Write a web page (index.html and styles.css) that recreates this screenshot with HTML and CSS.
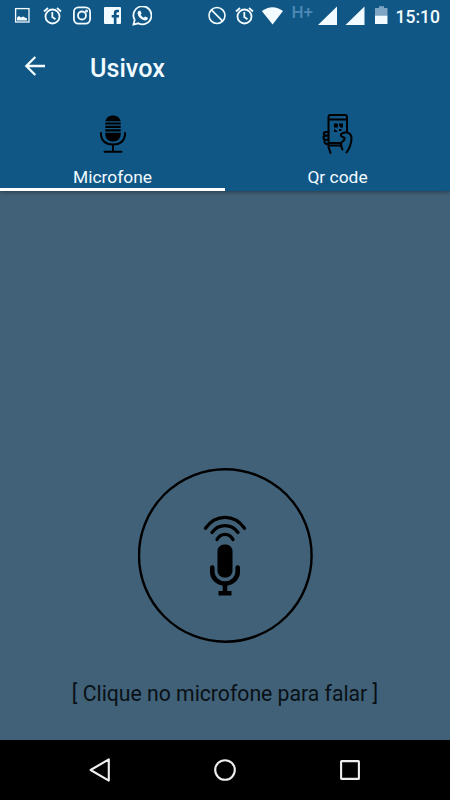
FILE: index.html
```
<!DOCTYPE html>
<html lang="pt-BR">
<head>
  <meta charset="UTF-8" />
  <meta name="viewport" content="width=device-width, initial-scale=1.0" />
  <title>Usivox</title>
  <link rel="stylesheet" href="styles.css">
</head>
<body>
  <div class="screen">
    <header class="header">
      <div class="status-bar">
        <div class="notifications">
          <svg viewBox="0 0 20 20"><rect x="3.6" y="2.6" width="13.4" height="13.4" fill="none" stroke="currentColor" stroke-width="1.3"/><path d="M5 14.5v-3l2-1.500 2 1.500 2-1 2 1 2 1v2z" fill="currentColor"/></svg>
          <svg viewBox="0 0 20 20" fill="none" stroke="currentColor" stroke-width="1.8"><circle cx="10.500" cy="10.500" r="7"/><path d="M10.300 6v5l3.200 2.200M2 5.500l4-3.500M19 5.500l-4-3.500"/></svg>
          <svg viewBox="0 0 20 20" fill="none" stroke="currentColor" stroke-width="1.8"><rect x="1.900" y="1.400" width="16.200" height="16.200" rx="4.500"/><circle cx="10" cy="9.500" r="4"/><circle cx="14.500" cy="5" r=".6"/></svg>
          <svg viewBox="0 0 20 20"><path fill="currentColor" d="M3 1h15q1 0 1 1v15q0 1-1 1h-3.500v-6.500H17V9h-2.500V7.500q0-1.300 1.300-1.300H17V3.700h-2.200q-3 0-3 3.300v2H9.700v2.500h2.100V18H3q-1 0-1-1V2q0-1 1-1z"/></svg>
          <svg viewBox="0 0 20 20"><path d="M1.500 18.500l1.200-4.600A9 9 0 1 1 6.300 17.300z" fill="none" stroke="currentColor" stroke-width="1.800"/><path fill="currentColor" d="M6.900 4.700h1.500l1.200 2.800-1 1.300q1.200 2.200 3.200 3l1.300-1.400 2.800 1.400q-.2 2.600-3 2.700-6.400-1.500-7.400-7.200 0-1.700 1.400-2.600z"/></svg>
        </div>
        <div class="system">
          <svg viewBox="0 0 22 22" fill="none" stroke="currentColor" stroke-width="1.600"><circle cx="11" cy="10.500" r="8"/><path d="M5.400 4.900l11.200 11.200"/></svg>
          <svg viewBox="0 0 22 22" fill="none" stroke="currentColor" stroke-width="1.800"><circle cx="10.500" cy="11.500" r="7"/><path d="M10.300 7v5l3.200 2.200M2 6.500l4-3.500M19 6.500l-4-3.500"/></svg>
          <svg viewBox="0 0 22 22"><path fill="currentColor" d="M.8 6Q6 2.200 11.500 2.200T22 6L11.600 19.600z"/></svg>
          <span class="network">H+</span>
          <svg viewBox="0 0 22 22"><path fill="currentColor" d="M2 20L21 1.500V20z"/></svg>
          <svg viewBox="0 0 22 22"><path fill="currentColor" d="M1.500 20l19-18.500V20z"/></svg>
          <svg viewBox="0 0 22 22"><path class="battery-empty" d="M4 3h4V1.200h5V3h3.500v7.500H4z"/><path fill="currentColor" d="M4 10.500h12.500V19H4z"/></svg>
        </div>
        <span class="clock">15:10</span>
      </div>
      <div class="toolbar">
        <svg class="back" viewBox="0 0 22 22" fill="none" stroke="currentColor" stroke-width="2.300"><path d="M21 11H3M11.300 2L2.300 11l9 9"/></svg>
        <h1>Usivox</h1>
      </div>
      <nav class="tabs">
        <a class="tab active">
          <svg viewBox="0 0 40 40" fill="none" stroke="#000">
            <rect x="12.300" y=".5" width="15.400" height="26" rx="7" fill="#000" stroke="none"/>
            <path class="mic-gaps" d="M12 6.800h16M12 10.200h16M12 13.600h16M12 17.200h16"/>
            <path stroke-width="2" stroke-linecap="round" d="M8 18v2.500q1.500 9 12 9t12-9V18M20 30v6.500M11.500 36.700h17"/>
          </svg>
          <span>Microfone</span>
        </a>
        <a class="tab">
          <svg viewBox="0 0 40 40" fill="none" stroke="#000" stroke-width="2" stroke-linecap="round" stroke-linejoin="round">
            <path d="M29 17V2q0-2-2-2H12.500q-2 0-2 2v27q0 1.500 1.500 1.500h11.500M10.500 4.500H29M10.500 28H22"/>
            <path d="M10.500 17H7.800q-2 0-2 1.800t2 1.800h2.700M9 20.700H7.500q-2 0-2 2t2 2h3M9 24.700H7.500Q6 25.500 6.500 27.300q.5 1.700 4 2.200M10.500 30v2l2 6"/>
            <path d="M29 17.500q4.500 1 4.500 6-.2 7.500-5 14M29 17.300q-4 .2-5.500 1.400-1.500 1.700.5 3l2.500 1q.5 2.500-2 3.800-2 1.200-1.500 4.500l1.500 3.500"/>
            <path fill="#000" stroke="none" d="M16 8.500h3.800v4H16zM21 8.500h4v4h-3V11h-1zM16 14h1.300v1.500h2V17H16zM21 14h2.500v2H21z"/>
          </svg>
          <span>Qr code</span>
        </a>
      </nav>
    </header>

    <main class="content">
      <button class="mic-button" aria-label="Microfone">
        <svg viewBox="0 0 175 175" fill="none" stroke="#000" stroke-linecap="round">
          <circle cx="87.300" cy="87.500" r="86.300" stroke-width="2.400"/>
          <g transform="translate(64 46)">
            <path stroke-width="3.300" d="M3.500 14.300Q11 3.300 23 3.300t19.500 11M10 18.500Q15 11.700 23 11.700T36 18.500M15 25.500q2.700-5.200 8-5.200t8 5.200"/>
            <rect x="15.500" y="30.500" width="15" height="33" rx="6.500" fill="#000" stroke="none"/>
            <path stroke-width="4.600" d="M10.300 53.500V58a12.700 11.500 0 0 0 25.400 0v-4.500"/>
            <path fill="#000" stroke="none" d="M20.700 69.500h4.600v7.500h4.200v4.500h-13V77h4.200z"/>
          </g>
        </svg>
      </button>
      <p>[ Clique no microfone para falar ]</p>
    </main>

    <footer class="nav-bar">
      <svg viewBox="0 0 24 24"><path d="M20.800 1.400v21.200L2.600 12z"/></svg>
      <svg viewBox="0 0 24 24"><circle cx="12" cy="12" r="9.800"/></svg>
      <svg viewBox="0 0 24 24"><rect x="3.100" y="3.100" width="17.800" height="17.800" rx=".5"/></svg>
    </footer>
  </div>
</body>
</html>
```
FILE: styles.css
```
body {
  margin: 0;
  font-family: Roboto, sans-serif;
}
svg {
  display: block;
  flex: none;
}
.screen {
  display: flex;
  flex-direction: column;
  width: 450px;
  height: 800px;
  overflow: hidden;
  background: #406177;
}
.header {
  background: #115786;
  color: #f2fbff;
  box-shadow: 0 1px 4px rgba(0,0,0,0.4);
}
.status-bar {
  display: flex;
  height: 32px;
  padding: 0 10px 0 12px;
  box-sizing: border-box;
}
.notifications {
  display: flex;
  gap: 10px;
  padding-top: 6px;
}
.notifications svg {
  width: 20px;
  height: 20px;
}
.system {
  display: flex;
  gap: 5.5px;
  margin-left: 54px;
  padding-top: 5px;
}
.system svg {
  width: 22px;
  height: 22px;
}
.network {
  width: 19px;
  padding-left: 3px;
  font-size: 17px;
  line-height: 14px;
  font-weight: 500;
  color: #4d89b4;
}
.battery-empty {
  fill: #7ea6c4;
}
.clock {
  margin-left: auto;
  font-size: 17.5px;
  line-height: 34px;
  font-weight: 500;
}
.toolbar {
  display: flex;
  align-items: center;
  height: 70px;
  padding-left: 24px;
}
.back {
  width: 22px;
  height: 22px;
  margin-bottom: 2px;
}
.toolbar h1 {
  margin: 2px 0 0 44px;
  font-size: 25.2px;
  font-weight: 500;
}
.tabs {
  display: flex;
  height: 89px;
}
.tab {
  display: flex;
  flex: 1;
  flex-direction: column;
  align-items: center;
  padding-top: 13px;
  border-bottom: 3px solid transparent;
  font-size: 17.4px;
}
.tab.active {
  border-color: #fff;
}
.tab svg {
  width: 40px;
  height: 40px;
  overflow: visible;
}
.mic-gaps {
  stroke: #115786;
  stroke-width: 1.3;
}
.tab span {
  margin-top: 12px;
  line-height: 20px;
}
.content {
  display: flex;
  flex: 1;
  flex-direction: column;
  align-items: center;
  justify-content: flex-end;
}
.mic-button {
  padding: 0;
  border: none;
  background: none;
}
.mic-button svg {
  width: 175px;
  height: 175px;
}
.content p {
  margin: 37px 0 32px;
  font-size: 21.2px;
  line-height: 28px;
  color: #091016;
}
.nav-bar {
  display: flex;
  align-items: center;
  justify-content: center;
  gap: 101px;
  height: 60px;
  background: #000;
}
.nav-bar svg {
  width: 24px;
  height: 24px;
  fill: none;
  stroke: #eee;
  stroke-width: 2.1;
  stroke-linejoin: round;
}
```
